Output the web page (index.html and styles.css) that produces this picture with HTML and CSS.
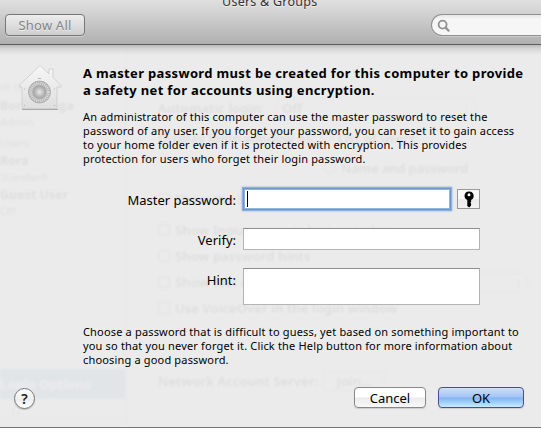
FILE: index.html
```html
<!DOCTYPE html>
<html lang="en">
<head>
    <meta charset="UTF-8">
    <title>Users &amp; Groups</title>
    <link rel="stylesheet" href="styles.css">
</head>
<body>
    <div class="window">
        <header class="toolbar">
            <div class="title">Users &amp; Groups</div>
            <div class="tools">
                <button class="show-all" type="button">Show All</button>
                <div class="search">
                    <svg width="14" height="14" viewBox="0 0 14 14" fill="none" stroke="#929292">
                        <circle cx="5.6" cy="5.6" r="4" stroke-width="1.8"/>
                        <path d="M8.6 8.6L12.2 12.2" stroke-width="2.3"/>
                    </svg>
                </div>
            </div>
        </header>

        <div class="content">
            <!-- dimmed pane behind the sheet -->
            <div class="pane" aria-hidden="true">
                <div class="sidebar">
                    <div class="users">
                        <div class="group">nt User</div>
                        <div class="user">Boris Panga</div>
                        <div class="role">Admin</div>
                        <div class="group others">Users</div>
                        <div class="user">Rora</div>
                        <div class="role">Standard</div>
                        <div class="user guest">Guest User</div>
                        <div class="role">Off</div>
                    </div>
                    <div class="login-options">Login Options</div>
                    <div class="sidebar-tools">&#8962;</div>
                </div>
                <div class="options">
                    <div class="row auto">Automatic login: <span class="popup">Off <i>&#8597;</i></span></div>
                    <div class="row display">Display login window as: <span class="box round"></span> List of users</div>
                    <div class="row name"><span class="box round"></span>Name and password</div>
                    <div class="row first"><span class="box"></span>Show the Sleep, Restart, and Shut Down</div>
                    <div class="row"><span class="box"></span>Show Input menu in login window</div>
                    <div class="row"><span class="box"></span>Show password hints</div>
                    <div class="row"><span class="box"></span>Show fast user switching menu as <span class="popup wide"><i>&#8597;</i></span></div>
                    <div class="row"><span class="box"></span>Use VoiceOver in the login window</div>
                    <div class="row network">Network Account Server: <span class="join">Join...</span></div>
                </div>
            </div>

            <form class="sheet">
                <svg class="house" width="44" height="48" viewBox="0 0 44 48">
                    <defs>
                        <linearGradient id="wall" x1="0" y1="0" x2="0" y2="1">
                            <stop offset="0" stop-color="#f7f7f7"/>
                            <stop offset="1" stop-color="#dedede"/>
                        </linearGradient>
                        <radialGradient id="dial">
                            <stop offset="0" stop-color="#e8e8e8"/>
                            <stop offset="1" stop-color="#a2a2a2"/>
                        </radialGradient>
                    </defs>
                    <path d="M4 44.500H40" stroke="#aaa" stroke-width="1.2"/>
                    <path d="M22 0.500L31 9V4H35V12.500L43 20.500V22H39V43.500H4V22H1V20.500Z" fill="url(#wall)" stroke="#cacaca" stroke-width=".8"/>
                    <circle cx="21.500" cy="27" r="11" fill="#b4b4b4" stroke="#a0a0a0" stroke-width=".7"/>
                    <circle cx="21.500" cy="27" r="8.800" fill="none" stroke="#dcdcdc" stroke-width="3" stroke-dasharray="1 1"/>
                    <circle cx="21.500" cy="27" r="6.500" fill="url(#dial)"/>
                    <path d="M20 13.500H23M6 40.500H7M36 40.500H37M6 24H7M36 24H37" stroke="#b4b4b4"/>
                </svg>

                <div class="main">
                    <h1>
                        <span class="line">A master password must be created for this computer to provide</span>
                        <span class="line">a safety net for accounts using encryption.</span>
                    </h1>
                    <p class="intro">
                        <span class="line">An administrator of this computer can use the master password to reset the</span>
                        <span class="line">password of any user. If you forget your password, you can reset it to gain access</span>
                        <span class="line">to your home folder even if it is protected with encryption. This provides</span>
                        <span class="line">protection for users who forget their login password.</span>
                    </p>

                    <div class="fields">
                        <label for="password">Master password:</label>
                        <div class="password-row">
                            <div class="field focused" id="password"><span class="caret"></span></div>
                            <button class="key" type="button">
                                <svg width="12" height="17" viewBox="0 0 12 17">
                                    <path fill-rule="evenodd" d="M6 .5C9 .5 10.700 2.400 10.700 5C10.700 7 9.600 8.300 8.100 9V11L7.300 11.700L8.100 12.500V14.500L6.200 16.500L4.300 15V9C2.700 8.300 1.500 7 1.500 5C1.500 2.400 3.200 .5 6 .5ZM6 2.200A1.500 1.500 0 1 0 6 5.200A1.500 1.500 0 1 0 6 2.200Z"/>
                                </svg>
                            </button>
                        </div>
                        <label for="verify">Verify:</label>
                        <div class="field" id="verify"></div>
                        <label for="hint">Hint:</label>
                        <div class="field hint" id="hint"></div>
                    </div>

                    <p class="advice">
                        <span class="line">Choose a password that is difficult to guess, yet based on something important to</span>
                        <span class="line">you so that you never forget it. Click the Help button for more information about</span>
                        <span class="line">choosing a good password.</span>
                    </p>
                </div>

                <footer class="actions">
                    <button class="help" type="button">?</button>
                    <button class="btn cancel" type="button">Cancel</button>
                    <button class="btn ok" type="button">OK</button>
                </footer>
            </form>
        </div>
    </div>
</body>
</html>
```

FILE: styles.css
```css
* {
    box-sizing: border-box;
}
body {
    margin: 0;
    font-family: "Noto Sans", "Open Sans", sans-serif;
    font-size: 13px;
    color: #000;
    background: #ebebeb;
    overflow: hidden;
}
button {
    font-family: inherit;
    padding: 0;
}
.window {
    display: flex;
    flex-direction: column;
    width: 541px;
    height: 428px;
    border-bottom: 1px solid #777;
}

/* toolbar */
.toolbar {
    height: 45px;
    background: linear-gradient(#e0e0e0, #b0b0b0);
    border-bottom: 1px solid #5c5c5c;
}
.title {
    height: 14px;
    line-height: 18px;
    margin-top: -7px;
    padding-left: 222px;
    font-size: 12.5px;
    letter-spacing: 0.25px;
    color: #333;
    text-shadow: 0 1px 0 #eee;
    white-space: nowrap;
}
.tools {
    display: flex;
    justify-content: space-between;
    margin-top: 7px;
    padding-left: 5px;
}
.show-all {
    width: 80px;
    height: 22px;
    border: 1px solid #777;
    border-radius: 4px;
    background: linear-gradient(#ededed, #cecece);
    color: #858585;
    font-size: 13px;
    letter-spacing: 0.2px;
    line-height: 20px;
    text-shadow: 0 1px 0 #eee;
    box-shadow: 0 1px 0 #d0d0d0;
}
.search {
    width: 110px;
    height: 22px;
    padding: 4px 5px;
    border: 1px solid #909090;
    border-right: 0;
    border-radius: 11px 0 0 11px;
    background: linear-gradient(#e6e6e6, #f6f6f6 4px);
    box-shadow: 0 1px 0 #ccc;
}
.search svg {
    display: block;
}

/* content */
.content {
    position: relative;
    flex: 1;
    background: linear-gradient(#b9b9b9, #d8d8d8 4px, #ebebeb 10px);
}
.pane {
    position: absolute;
    inset: 0;
    display: flex;
    overflow: hidden;
    opacity: 0.055;
    filter: blur(0.8px);
    white-space: nowrap;
}
.sidebar {
    width: 126px;
    border-right: 1px solid #aaa;
}
.users {
    height: 324px;
    padding-top: 34px;
}
.group, .role {
    font-size: 11px;
    line-height: 15px;
}
.group {
    margin-bottom: 4px;
}
.user {
    font-size: 12.5px;
    font-weight: bold;
    line-height: 16px;
}
.others {
    margin: 6px 0 3px;
}
.guest {
    margin-top: 3px;
}
.login-options {
    height: 30px;
    line-height: 30px;
    background: #5a87c7;
    color: #fff;
    font-weight: bold;
}
.sidebar-tools {
    height: 19px;
    padding-left: 11px;
    border-bottom: 1px solid #aaa;
    font-size: 17px;
    line-height: 17px;
}
.options {
    padding: 51px 0 0 32px;
    font-weight: 600;
    letter-spacing: 0.1px;
}
.row {
    display: flex;
    align-items: center;
    gap: 5px;
    height: 26px;
}
.auto {
    gap: 12px;
    height: 24px;
}
.display {
    height: 36px;
}
.name {
    height: 24px;
    padding-left: 166px;
    letter-spacing: -0.15px;
}
.first {
    margin-top: 1px;
    height: 36px;
}
.box {
    width: 12px;
    height: 12px;
    border: 1px solid #444;
    border-radius: 2px;
}
.round {
    border-radius: 50%;
}
.popup {
    display: flex;
    justify-content: space-between;
    width: 200px;
    padding: 0 5px;
    border: 1px solid #aaa;
    border-radius: 4px;
}
.wide {
    justify-content: flex-end;
    width: 130px;
}
.network {
    margin-top: 47px;
}
.join {
    padding: 0 12px;
    border: 1px solid #888;
    border-radius: 3px;
}

/* sheet */
.sheet {
    position: relative;
    padding: 0 17px 0 14px;
}
.house {
    position: absolute;
    left: 18px;
    top: 20px;
}
.main {
    height: 341px;
    padding: 20px 0 0 69px;
}
.line {
    display: block;
    white-space: nowrap;
}
h1 {
    margin: 0;
    font-size: 13px;
    font-weight: bold;
    line-height: 17px;
    letter-spacing: 0.34px;
}
.intro, .advice {
    margin: 0;
    font-size: 11px;
    line-height: 14px;
    letter-spacing: 0.17px;
}
.intro {
    margin-top: 11px;
}
.fields {
    display: grid;
    grid-template-columns: 153px 237px;
    grid-template-rows: 22px 22px 37px;
    column-gap: 7px;
    row-gap: 18px;
    margin-top: 22px;
}
.fields label {
    text-align: right;
    font-size: 13px;
    line-height: 24px;
}
.field {
    background: #fff;
    border: 1px solid #b4b4b4;
    border-top-color: #8f8f8f;
}
.hint {
    height: 37px;
}
.password-row {
    display: flex;
    align-items: center;
    gap: 6px;
}
.focused {
    width: 208px;
    height: 22px;
    padding: 2px 3px;
    border: 1px solid #7096c8;
    box-shadow: inset 0 0 0 1px #92b4df, 0 0 0 1px #8cb1e0, 0 0 2px 1px #8cb1e0;
}
.caret {
    display: block;
    width: 1px;
    height: 16px;
    background: #000;
}
.key {
    display: flex;
    align-items: center;
    justify-content: center;
    width: 23px;
    height: 20px;
    border: 1px solid #989898;
    background: linear-gradient(#f9f9f9 48%, #ebebeb 52%, #f3f3f3);
}
.advice {
    margin-top: 20px;
}

/* bottom buttons */
.actions {
    display: flex;
    align-items: flex-start;
}
.help {
    width: 21px;
    height: 21px;
    margin: 2px auto 0 0;
    border: 1px solid #777;
    border-radius: 50%;
    background: linear-gradient(#fff, #eee 55%, #fff);
    font-size: 14px;
    font-weight: 600;
    line-height: 18px;
    color: #222;
    box-shadow: 0 1px 1px #bbb;
}
.btn {
    height: 21px;
    margin-top: 1px;
    border: 1px solid #888;
    border-radius: 4px;
    font-size: 13px;
    line-height: 18px;
    box-shadow: 0 1px 1px #ccc;
}
.cancel {
    width: 72px;
    margin-right: 12px;
    background: linear-gradient(#fff 48%, #ececec 52%, #f8f8f8);
}
.ok {
    width: 86px;
    border-color: #4e4b94;
    background: linear-gradient(#cfdff8, #a3c5f4 48%, #82b3f3 52%, #c3edff);
}
```
